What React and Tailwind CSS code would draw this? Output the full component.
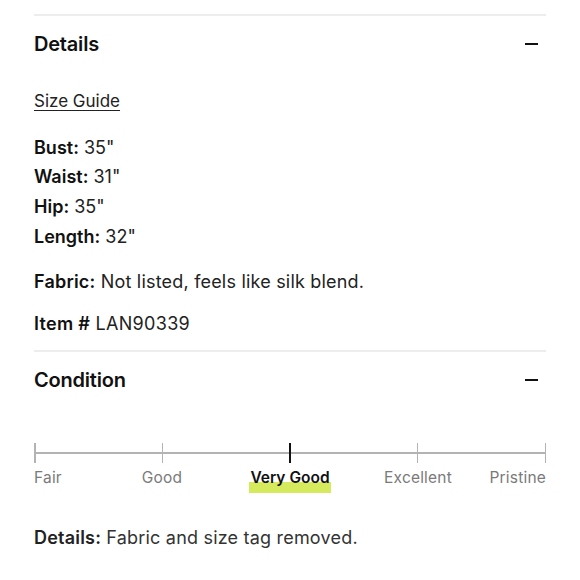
import { useState } from 'react'

const measurements = [
  { label: 'Bust', value: '35"' },
  { label: 'Waist', value: '31"' },
  { label: 'Hip', value: '35"' },
  { label: 'Length', value: '32"' },
]

const grades = ['Fair', 'Good', 'Very Good', 'Excellent', 'Pristine']

const Minus = () => <span className="block w-[13px] h-[2.5px] bg-[#111] mr-[8px]" />

const SectionHeader = ({ title, onToggle }) => (
  <button
    type="button"
    onClick={onToggle}
    className="w-full h-[58px] flex items-center justify-between text-left border-t-2 border-[#ededed]"
  >
    <span className="text-[20px] font-semibold text-[#111] tracking-[-0.2px]">{title}</span>
    <Minus />
  </button>
)

const ConditionScale = ({ current }) => {
  const align = ['text-left', 'text-center', 'text-center', 'text-center', 'text-right']
  return (
    <div>
      <div className="relative h-[20px] flex justify-between">
        <div className="absolute left-0 right-0 top-[9px] h-[2px] bg-[#b3b3b3]" />
        {grades.map((g, i) => (
          <span
            key={g}
            className={i === current ? 'relative w-[2.5px] h-[20px] bg-[#111] mx-[-0.5px]' : 'relative w-[1.5px] h-[20px] bg-[#b3b3b3]'}
          />
        ))}
      </div>
      <div className="grid grid-cols-[64px_128px_128px_128px_64px] mt-[6px] text-[15.5px] leading-[18px]">
        {grades.map((g, i) => (
          <div key={g} className={align[i]}>
            {i === current ? (
              <span className="relative inline-block font-semibold text-[#111]">
                <span className="absolute left-[-1px] right-[-1px] top-[13px] h-[11px] bg-[#d6ea5e]" />
                <span className="relative">{g}</span>
              </span>
            ) : (
              <span className="text-[#7a7a7a] tracking-[0.2px]">{g}</span>
            )}
          </div>
        ))}
      </div>
    </div>
  )
}

export default function App() {
  const [open, setOpen] = useState({ details: true, condition: true })

  return (
    <div className="w-[580px] h-[580px] bg-white overflow-hidden px-[34px] pt-[14px] font-['Inter',sans-serif] text-[#222]">
      <SectionHeader title="Details" onToggle={() => setOpen({ ...open, details: !open.details })} />
      {open.details && (
        <div className="text-[18px] leading-[29.7px] pb-[11px]">
          <a href="#" className="block mt-[15px] text-[17px] underline underline-offset-[3px] decoration-[1px] text-[#222]">
            Size Guide
          </a>
          <div className="mt-[16px]">
            {measurements.map((m) => (
              <div key={m.label}>
                <span className="font-semibold text-[#111]">{m.label}:</span> {m.value}
              </div>
            ))}
          </div>
          <p className="mt-[15px] tracking-[0.2px]">
            <span className="font-semibold text-[#111]">Fabric:</span> Not listed, feels like silk blend.
          </p>
          <p className="mt-[13px] tracking-[0.3px]">
            <span className="font-semibold text-[#111]">Item #</span> LAN90339
          </p>
        </div>
      )}
      <SectionHeader title="Condition" onToggle={() => setOpen({ ...open, condition: !open.condition })} />
      {open.condition && (
        <div className="pt-[35px]">
          <ConditionScale current={2} />
          <p className="mt-[36px] text-[18px] leading-[30px] text-[#333] tracking-[0.2px]">
            <span className="font-semibold text-[#222]">Details:</span> Fabric and size tag removed.
          </p>
        </div>
      )}
    </div>
  )
}
